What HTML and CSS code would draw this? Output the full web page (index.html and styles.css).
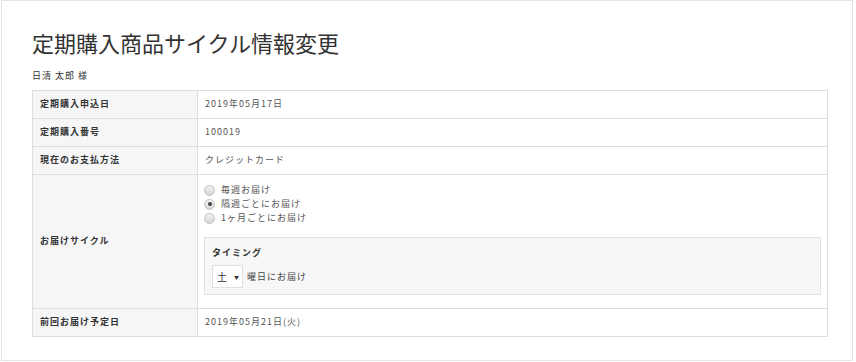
FILE: index.html
```html
<!DOCTYPE html>
<html lang="ja">
<head>
<meta charset="utf-8">
<title>定期購入商品サイクル情報変更</title>
<link rel="stylesheet" href="styles.css">
</head>
<body>
<div class="frame">
  <h1 class="title">定期購入商品サイクル情報変更</h1>
  <p class="name">日清 太郎 様</p>
  <table class="info">
    <tr>
      <th>定期購入申込日</th>
      <td>2019年05月17日</td>
    </tr>
    <tr>
      <th>定期購入番号</th>
      <td>100019</td>
    </tr>
    <tr>
      <th>現在のお支払方法</th>
      <td>クレジットカード</td>
    </tr>
    <tr>
      <th>お届けサイクル</th>
      <td class="cycle">
        <ul class="radios">
          <li><span class="radio"></span>毎週お届け</li>
          <li><span class="radio checked"></span>隔週ごとにお届け</li>
          <li><span class="radio"></span>1ヶ月ごとにお届け</li>
        </ul>
        <div class="timing">
          <div class="timing-title">タイミング</div>
          <div class="timing-row">
            <span class="select">土<span class="caret">▼</span></span>
            <span class="timing-text">曜日にお届け</span>
          </div>
        </div>
      </td>
    </tr>
    <tr>
      <th>前回お届け予定日</th>
      <td>2019年05月21日(火)</td>
    </tr>
  </table>
</div>
</body>
</html>
```
FILE: styles.css
```css
html, body {
  margin: 0;
  padding: 0;
  background: #fff;
}
body {
  font-family: "Noto Sans CJK JP", "Noto Sans", sans-serif;
  color: #333;
}
.frame {
  margin-left: 1px;
  width: 820px;
  height: 333px;
  border: 1px solid #e4e4e4;
  padding: 26px 0 0 30px;
}
.title {
  margin: 0;
  font-size: 22px;
  line-height: 30px;
  font-weight: normal;
  color: #333;
}
.name {
  margin: 12px 0 7px;
  font-size: 9px;
  line-height: 14px;
  letter-spacing: 1px;
  color: #333;
}
.info {
  border-collapse: collapse;
  width: 796px;
  font-size: 9px;
  letter-spacing: 1px;
}
.info th, .info td {
  border: 1px solid #dedede;
  line-height: 14px;
  padding: 6px 7px 7px;
  text-align: left;
  vertical-align: middle;
}
.info th {
  width: 150px;
  background: #f6f6f6;
  font-weight: bold;
  color: #333;
}
.info td {
  background: #fff;
  color: #555;
}
.info td.cycle {
  padding: 8px 6px 13px 6px;
}
.radios {
  list-style: none;
  margin: 0;
  padding: 0;
}
.radios li {
  display: flex;
  align-items: center;
  height: 14px;
  gap: 6px;
}
.radio {
  width: 9px;
  height: 9px;
  border: 1px solid #c4c4c4;
  border-radius: 50%;
  background: linear-gradient(#f2f2f2, #d6d6d6);
  display: flex;
  align-items: center;
  justify-content: center;
  flex: none;
}
.radio.checked::after {
  content: "";
  width: 4px;
  height: 4px;
  border-radius: 50%;
  background: #444;
}
.timing {
  margin-top: 12px;
  border: 1px solid #e2e2e2;
  background: #f7f7f7;
  padding: 8px 7px 6px;
}
.timing-title {
  font-weight: bold;
  color: #333;
  line-height: 14px;
}
.timing-row {
  margin-top: 5px;
  display: flex;
  align-items: center;
  gap: 4px;
}
.select {
  display: flex;
  align-items: center;
  box-sizing: border-box;
  width: 31px;
  height: 23px;
  background: #fff;
  border: 1px solid #e0e0e0;
  padding-left: 4px;
  color: #333;
  font-size: 10px;
}
.caret {
  font-size: 5px;
  margin-left: 6px;
  color: #333;
}
.timing-text {
  color: #444;
}
```
